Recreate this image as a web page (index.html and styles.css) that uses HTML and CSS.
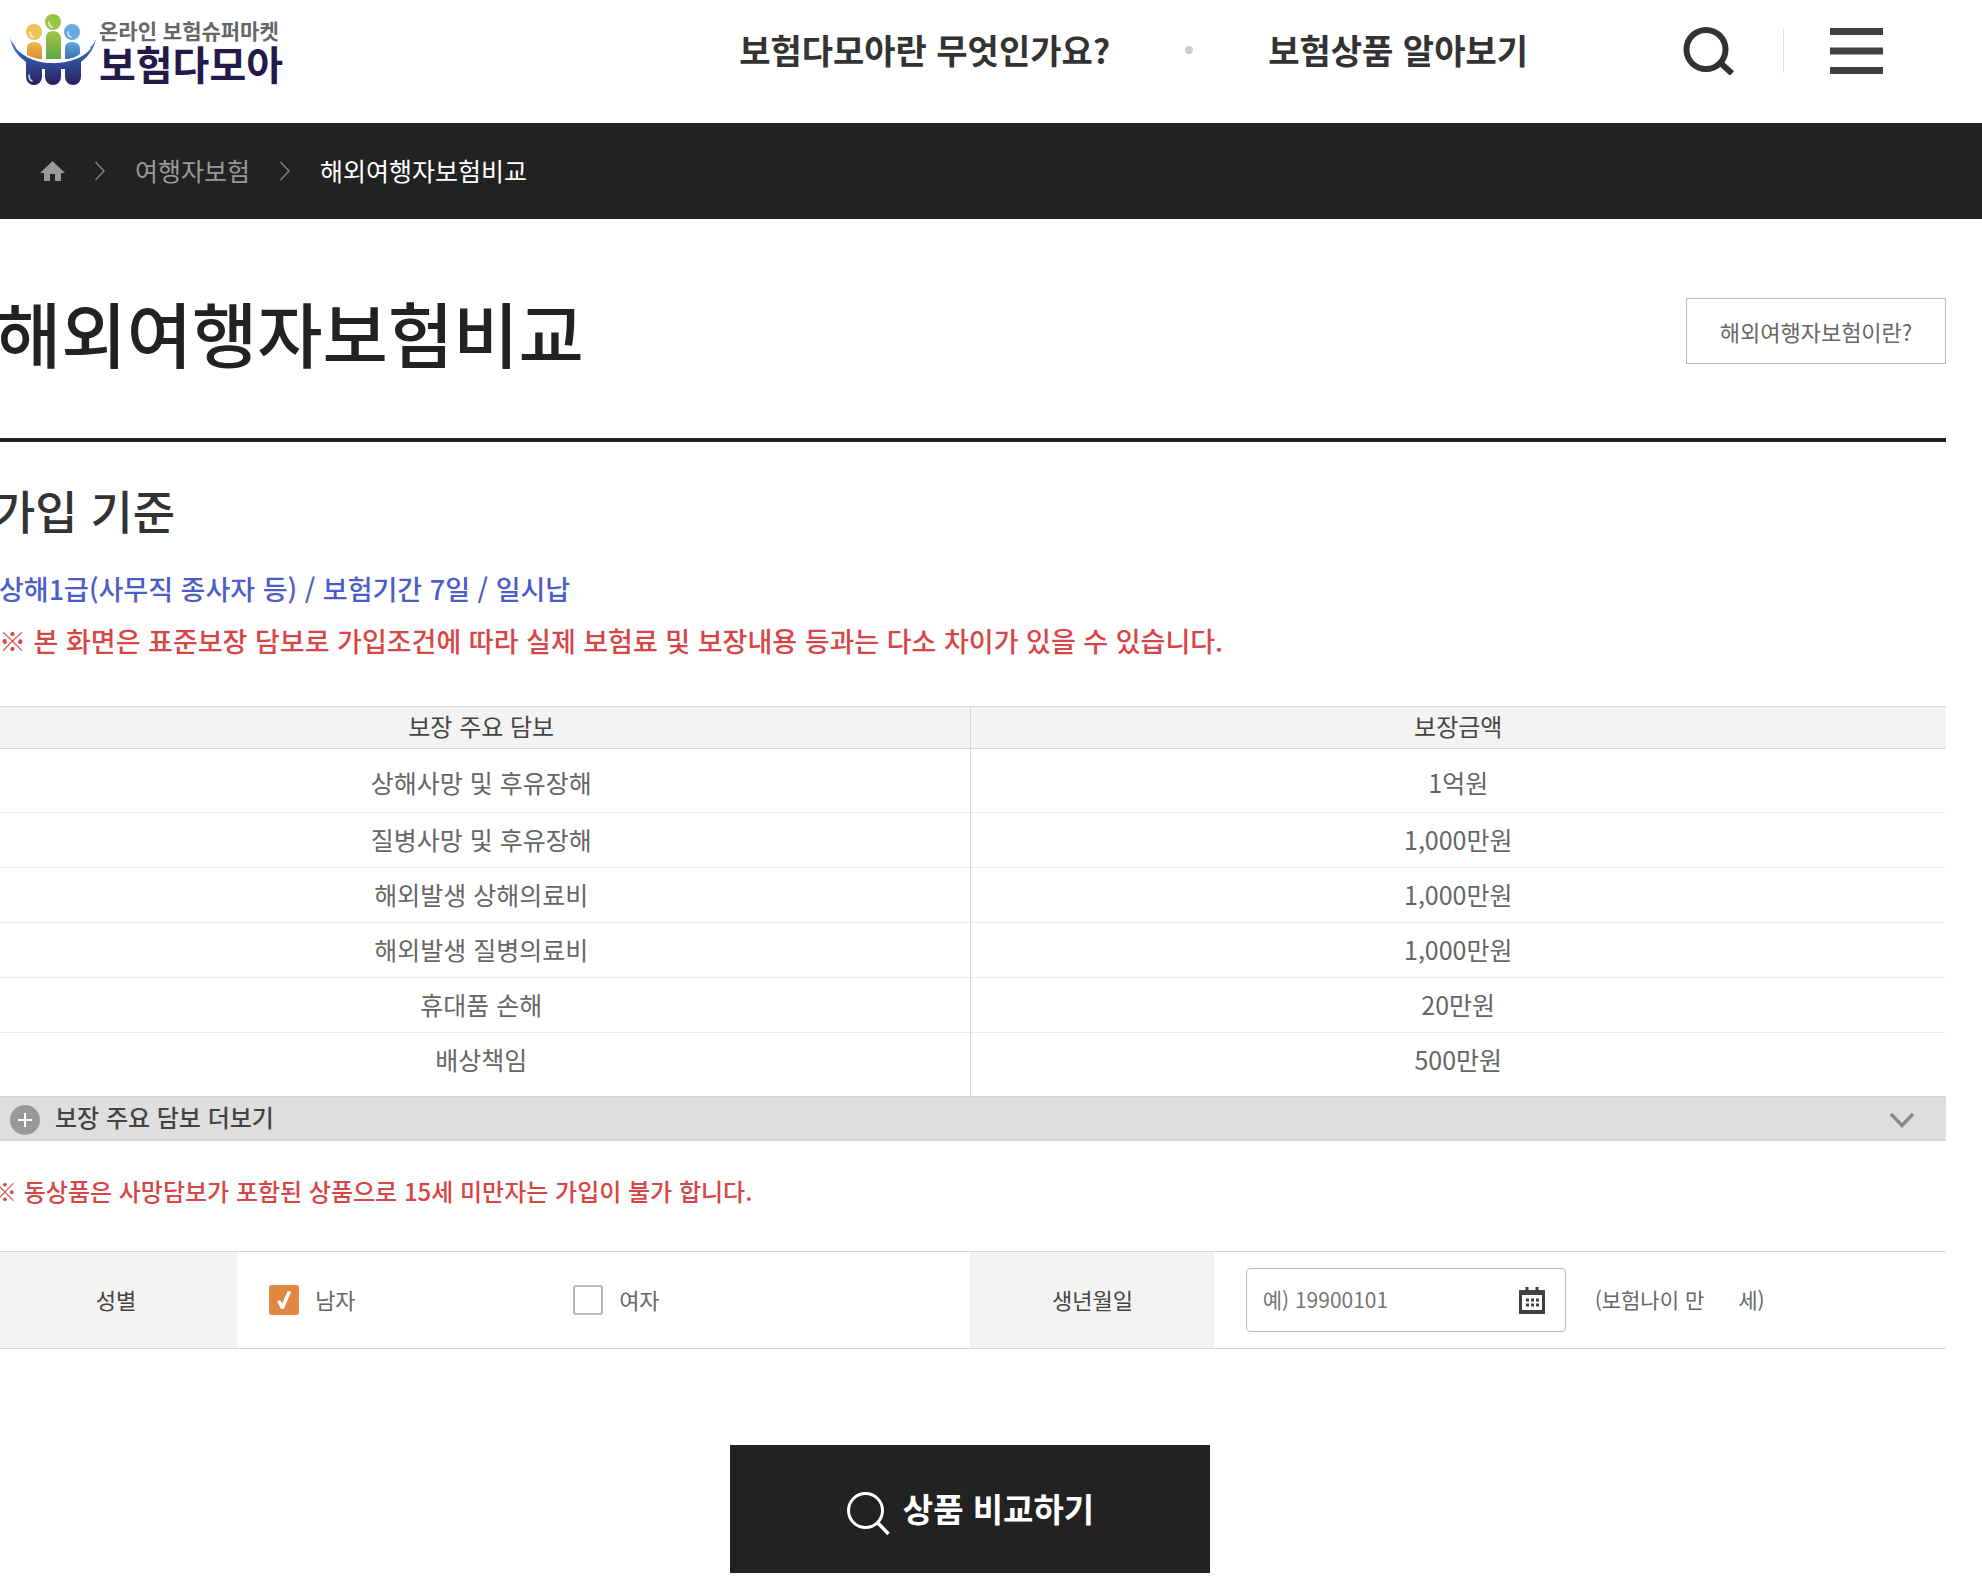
FILE: index.html
```html
<!DOCTYPE html>
<html lang="ko">
<head>
<meta charset="utf-8">
<meta name="viewport" content="width=device-width, initial-scale=1">
<title>해외여행자보험비교 - 보험다모아</title>
<link rel="stylesheet" href="styles.css">
</head>
<body>
<header class="header">
  <a class="logo" href="#">
    <svg class="logo-mark" width="87" height="72" viewBox="0 0 87 72" aria-hidden="true">
      <defs>
        <linearGradient id="bowl" x1="0" y1="0" x2="0" y2="1"><stop offset="0" stop-color="#4a86c8"/><stop offset=".5" stop-color="#2f4f9c"/><stop offset="1" stop-color="#2b1d5c"/></linearGradient>
        <linearGradient id="orange" x1="0" y1="0" x2="0" y2="1"><stop offset="0" stop-color="#efb84a"/><stop offset="1" stop-color="#dd8a35"/></linearGradient>
        <linearGradient id="green" x1="0" y1="0" x2="0" y2="1"><stop offset="0" stop-color="#a3c544"/><stop offset="1" stop-color="#5fa845"/></linearGradient>
        <linearGradient id="blue" x1="0" y1="0" x2="0" y2="1"><stop offset="0" stop-color="#63a6de"/><stop offset="1" stop-color="#3c6cb8"/></linearGradient>
      </defs>
      <circle cx="24" cy="18" r="8" fill="#efc357"/>
      <circle cx="43" cy="8" r="8" fill="#9cc343"/>
      <circle cx="62" cy="18" r="8" fill="#69a9df"/>
      <path d="M17 44V34q0-6 7-6t8 6v11q-8 1-15-1z" fill="url(#orange)"/>
      <path d="M36 45V24q0-7 7-7t8 7v21z" fill="url(#green)"/>
      <path d="M55 45V34q0-6 7-6t8 6v6q-6 5-15 5z" fill="url(#blue)"/>
      <path d="M0 24C14 56 72 56 86 25Q84 38 71 48V63a8 8 0 0 1-16 0V55h-4v8a8 8 0 0 1-16 0V55h-3v8a8 8 0 0 1-16 0V48Q2 38 0 24z" fill="url(#bowl)"/>
      <path d="M6 33C22 53 64 53 80 34" fill="none" stroke="#fff" stroke-width="2"/>
      <path d="M20 18q0 4 3 5M39 8q0 4 3 5M58 18q0 4 3 5M19 61q0 5 3 6" fill="none" stroke="#fff" stroke-width="1.6" stroke-linecap="round" opacity=".8"/>
    </svg>
    <span class="logo-text"><span class="logo-sub">온라인 보험슈퍼마켓</span><span class="logo-name">보험다모아</span></span>
  </a>
  <nav class="nav">
    <a href="#">보험다모아란 무엇인가요?</a>
    <span class="nav-dot"></span>
    <a href="#">보험상품 알아보기</a>
  </nav>
  <div class="tools">
    <button class="icon-button" type="button" aria-label="검색">
      <svg width="52" height="48" viewBox="0 0 52 48"><circle cx="23" cy="22.500" r="19.500" fill="none" stroke="#333" stroke-width="6"/><path d="M37 35.500L49 46.500" stroke="#333" stroke-width="6"/></svg>
    </button>
    <span class="tools-line"></span>
    <button class="icon-button" type="button" aria-label="전체메뉴">
      <svg width="53" height="46" viewBox="0 0 53 46"><path d="M0 3.500h53M0 23h53M0 42.500h53" stroke="#3f403f" stroke-width="7"/></svg>
    </button>
  </div>
</header>

<nav class="breadcrumb" aria-label="현재 위치">
  <a class="crumb-home" href="#" aria-label="홈"><svg width="25" height="20" viewBox="0 0 25 20"><path d="M12.500 0L25 12h-4v8h-6v-7h-5v7H4v-8H0z" fill="#999"/></svg></a>
  <svg width="10" height="20" viewBox="0 0 10 20" aria-hidden="true"><path d="M.5 1L9 10L.5 19" fill="none" stroke="#888" stroke-width="1.300"/></svg>
  <a class="crumb" href="#">여행자보험</a>
  <svg width="10" height="20" viewBox="0 0 10 20" aria-hidden="true"><path d="M.5 1L9 10L.5 19" fill="none" stroke="#888" stroke-width="1.300"/></svg>
  <a class="crumb crumb-current" href="#" aria-current="page">해외여행자보험비교</a>
</nav>

<main class="content">
  <div class="title-row">
    <h1 class="title">해외여행자보험비교</h1>
    <button class="about" type="button">해외여행자보험이란?</button>
  </div>

  <h2 class="subtitle">가입 기준</h2>
  <p class="criteria criteria-base">상해1급(사무직 종사자 등) / 보험기간 7일 / 일시납</p>
  <p class="criteria criteria-note">※ 본 화면은 표준보장 담보로 가입조건에 따라 실제 보험료 및 보장내용 등과는 다소 차이가 있을 수 있습니다.</p>

  <table class="coverage">
    <thead><tr><th scope="col">보장 주요 담보</th><th scope="col">보장금액</th></tr></thead>
    <tbody>
      <tr><td>상해사망 및 후유장해</td><td>1억원</td></tr>
      <tr><td>질병사망 및 후유장해</td><td>1,000만원</td></tr>
      <tr><td>해외발생 상해의료비</td><td>1,000만원</td></tr>
      <tr><td>해외발생 질병의료비</td><td>1,000만원</td></tr>
      <tr><td>휴대품 손해</td><td>20만원</td></tr>
      <tr><td>배상책임</td><td>500만원</td></tr>
    </tbody>
  </table>
  <button class="more" type="button" aria-expanded="false">
    <svg width="30" height="30" viewBox="0 0 30 30" aria-hidden="true"><circle cx="15" cy="15" r="15" fill="#999"/><path d="M15 8v14M8 15h14" stroke="#fff" stroke-width="2"/></svg>
    <span class="more-text">보장 주요 담보 더보기</span>
    <svg width="26" height="16" viewBox="0 0 26 16" aria-hidden="true"><path d="M2 2L13 13.500L24 2" fill="none" stroke="#8c8c8c" stroke-width="3.500"/></svg>
  </button>

  <p class="age-note">※ 동상품은 사망담보가 포함된 상품으로 15세 미만자는 가입이 불가 합니다.</p>

  <form class="search">
    <div class="fields">
      <div class="field-name" id="sex">성별</div>
      <div class="field-value" role="group" aria-labelledby="sex">
        <label class="choice"><input class="check" type="checkbox" checked><span class="choice-text">남자</span></label>
        <label class="choice"><input class="check" type="checkbox"><span class="choice-text">여자</span></label>
      </div>
      <label class="field-name" for="birth">생년월일</label>
      <div class="field-value">
        <div class="date">
          <input class="date-input" id="birth" type="text" placeholder="예) 19900101">
          <button class="icon-button" type="button" aria-label="달력">
            <svg width="26" height="27" viewBox="0 0 26 27"><path d="M0 3h26v24H0zM3 8v15h20V8z" fill="#3f403f" fill-rule="evenodd"/><path d="M8 0v6M18 0v6" stroke="#3f403f" stroke-width="3"/><path d="M7 13h3M12 13h3M17 13h3M7 18h3M12 18h3M17 18h3" stroke="#3f403f" stroke-width="3"/></svg>
          </button>
        </div>
        <span class="age"><span>(보험나이 만</span><span>세)</span></span>
      </div>
    </div>
    <button class="compare" type="submit">
      <svg width="43" height="43" viewBox="0 0 43 43" aria-hidden="true"><circle cx="18.500" cy="18.500" r="17" fill="none" stroke="#fff" stroke-width="3"/><path d="M30.500 30.500L41.500 42" stroke="#fff" stroke-width="3.500"/></svg>
      <span>상품 비교하기</span>
    </button>
  </form>
</main>
</body>
</html>
```
FILE: styles.css
```css
* {
  box-sizing: border-box;
}

body {
  margin: 0;
  overflow-x: hidden;
  background: #fff;
  color: #333;
  font-family: "Noto Sans CJK KR", "Noto Sans", sans-serif;
  font-size: 22px;
}

a {
  color: inherit;
  text-decoration: none;
}

button,
input {
  font: inherit;
  color: inherit;
}

button {
  cursor: pointer;
}

svg {
  display: block;
  flex: none;
}

h1,
h2,
p {
  margin: 0;
}

.icon-button {
  padding: 0;
  border: 0;
  background: none;
}

/* Header */
.header {
  display: flex;
  align-items: flex-start;
  height: 123px;
  padding: 14px 99px 0 10px;
}

.logo {
  display: flex;
  gap: 2px;
}

.logo-text {
  display: flex;
  flex-direction: column;
  font-weight: 700;
  white-space: nowrap;
}

.logo-sub {
  color: #666;
  font-size: 21px;
  line-height: 32px;
}

.logo-name {
  color: #231a4a;
  font-size: 40px;
  line-height: 34px;
}

.nav {
  display: flex;
  align-items: center;
  gap: 75px;
  margin-left: auto;
  font-size: 34px;
  font-weight: 700;
  line-height: 72px;
  white-space: nowrap;
}

.nav-dot {
  width: 8px;
  height: 8px;
  border-radius: 50%;
  background: #ccc;
}

.tools {
  display: flex;
  align-items: center;
  height: 74px;
  margin-left: 155px;
}

.tools-line {
  width: 1px;
  height: 44px;
  margin: 0 46px 0 48px;
  background: #ddd;
}

/* Breadcrumb */
.breadcrumb {
  display: flex;
  align-items: center;
  gap: 30px;
  height: 96px;
  padding-left: 40px;
  background: #222;
  color: #999;
  font-size: 25px;
}

.crumb {
  padding-bottom: 2px;
}

.crumb-current {
  color: #fff;
}

/* Content */
.content {
  margin: 0 36px 0 -7px;
}

.title-row {
  display: flex;
  align-items: center;
  justify-content: space-between;
  height: 223px;
  padding-top: 5px;
  border-bottom: 4px solid #231f20;
}

.title {
  padding-left: 3px;
  color: #222;
  font-size: 71px;
  font-weight: 500;
  line-height: 80px;
}

.about {
  width: 260px;
  height: 66px;
  padding: 0;
  border: 1px solid #bbb;
  background: #fff;
  color: #666;
}

.subtitle {
  padding: 34px 0 21px;
  font-size: 46px;
  font-weight: 500;
  line-height: 66px;
}

.criteria {
  padding-left: 6px;
  font-size: 27px;
  font-weight: 500;
  line-height: 52px;
  white-space: nowrap;
}

.criteria-base {
  color: #4b5dc9;
}

.criteria-note {
  color: #d74545;
}

/* Coverage table */
.coverage {
  width: 100%;
  margin-top: 39px;
  border-spacing: 0;
  table-layout: fixed;
  text-align: center;
}

.coverage th {
  padding: 0 0 3px;
  border: solid #d6d6d6;
  border-width: 1px 0;
  background: #f3f3f3;
  color: #444;
  font-size: 24px;
  font-weight: 400;
  line-height: 38px;
}

.coverage td {
  padding: 0 0 2px;
  border-bottom: 1px solid #ebebeb;
  color: #666;
  font-size: 25px;
  line-height: 52px;
}

.coverage th + th,
.coverage td + td {
  border-left: 1px solid #d6d6d6;
}

.coverage tbody tr:first-child td {
  padding: 7px 0 4px;
}

.coverage tbody tr:last-child td {
  padding-bottom: 11px;
  border-bottom: 0;
}

.more {
  display: flex;
  align-items: center;
  gap: 15px;
  width: 100%;
  height: 45px;
  padding: 4px 31px 0 17px;
  border: solid #d6d6d6;
  border-width: 1px 0 2px;
  background: #dedede;
  color: #444;
  font-size: 24px;
  font-weight: 500;
  line-height: 36px;
  text-align: left;
}

.more-text {
  flex: 1;
  padding-bottom: 6px;
}

.age-note {
  padding: 30px 0 40px;
  color: #d74545;
  font-size: 24px;
  font-weight: 500;
  line-height: 40px;
}

/* Search form */
.fields {
  display: grid;
  grid-template-columns: 1fr 3fr 1fr 3fr;
  height: 98px;
  border: solid #d6d6d6;
  border-width: 1px 0;
  color: #666;
}

.field-name {
  display: flex;
  align-items: center;
  justify-content: center;
  padding: 0 0 3px 2px;
  background: #f3f3f3;
  color: #444;
}

.field-value {
  display: flex;
  align-items: center;
  padding-left: 32px;
}

.choice {
  display: flex;
  align-items: center;
  gap: 16px;
  width: 304px;
}

.choice-text {
  padding-bottom: 3px;
}

.check {
  width: 30px;
  height: 30px;
  margin: 0;
  border: 2px solid #bbb;
  border-radius: 3px;
  appearance: none;
  background: #fff;
}

.check:checked {
  border-color: #e28742;
  background: #e28742;
}

.check:checked::before {
  display: block;
  width: 14px;
  height: 18px;
  margin: 4px 6px;
  background: #fff;
  clip-path: polygon(0 58%, 20% 50%, 36% 70%, 76% 0, 100% 4%, 48% 100%, 28% 100%);
  content: "";
}

.date {
  display: flex;
  align-items: center;
  width: 320px;
  height: 64px;
  padding: 0 20px 0 16px;
  border: 1px solid #bbb;
  border-radius: 4px;
}

.date-input {
  flex: 1;
  min-width: 0;
  padding: 0 0 2px;
  border: 0;
  background: none;
  font-size: 21px;
}

.date-input::placeholder {
  color: #757575;
  opacity: 1;
}

.age {
  display: flex;
  gap: 34px;
  padding: 0 0 3px 29px;
  font-size: 21px;
}

.compare {
  display: flex;
  align-items: center;
  justify-content: center;
  gap: 13px;
  width: 480px;
  height: 128px;
  margin: 96px auto 3px;
  padding: 8px 0 0 2px;
  border: 0;
  background: #222;
  color: #fff;
  font-size: 33px;
  font-weight: 700;
}

.compare span {
  padding-bottom: 10px;
}
```
